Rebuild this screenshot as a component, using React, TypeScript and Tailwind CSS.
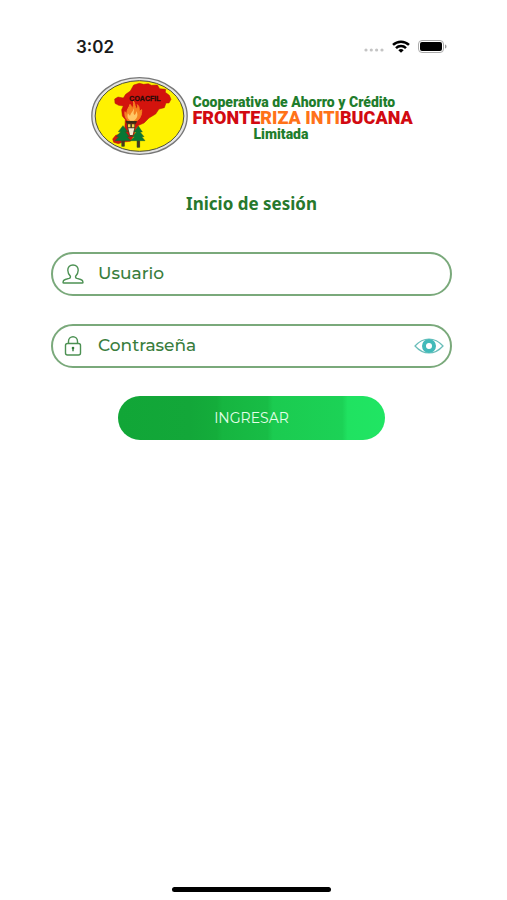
import { useState } from "react"

function StatusBar() {
  return (
    <div className="flex h-[59px] items-end justify-between pr-14 pl-[76px]">
      <span className="font-['Inter'] text-[17px] leading-6 font-semibold text-[#1a1a1a]">3:02</span>
      <div className="flex h-6 items-center gap-2 pb-0.5">
        <svg width="20" height="4" viewBox="0 0 20 4" className="mt-2" fill="#c4c4c4" aria-hidden="true">
          <circle cx="2" cy="2" r="1.6" />
          <circle cx="7.3" cy="2" r="1.6" />
          <circle cx="12.6" cy="2" r="1.6" />
          <circle cx="18" cy="2" r="1.6" />
        </svg>
        <svg width="18" height="13" viewBox="0 0 18 13" fill="none" stroke="#000" strokeWidth="2.5" aria-hidden="true">
          <path d="M1 4.9a11.6 11.6 0 0 1 16 0" />
          <path d="M4 8.1a7.2 7.2 0 0 1 10 0" />
          <path d="M9 12.8 6.3 10.2a3.9 3.9 0 0 1 5.4 0Z" fill="#000" stroke="none" />
        </svg>
        <svg width="29" height="13" viewBox="0 0 29 13" aria-hidden="true">
          <rect x="0.5" y="0.5" width="25" height="12" rx="3.5" fill="#fff" stroke="#aaa" />
          <rect x="2" y="2" width="22" height="9" rx="2" fill="#000" />
          <path d="M27 4.5c2 .6 2 3.4 0 4Z" fill="#999" />
        </svg>
      </div>
    </div>
  )
}

function Emblem() {
  return (
    <svg width="97" height="78" viewBox="15 20 291 234" className="shrink-0" role="img" aria-label="COACFIL">
      <ellipse cx="160.5" cy="137" rx="143" ry="115" fill="#e4e4e4" stroke="#777" strokeWidth="4" />
      <ellipse cx="160.5" cy="137" rx="133" ry="106" fill="#fff200" stroke="#4d4d3a" strokeWidth="3" />
      <path
        d="M143 44 160 39 173 42 187 40 196 45 214 44 221 55 239 57 238 66 250 75 255 87 249 98 240 98 235 112 219 116 209 131 189 143 174 158 158 165 149 176 143 196 133 213 112 215 97 220 83 216 80 206 89 195 106 190 116 178 118 148 109 137 107 118 112 107 98 105 87 99 86 86 96 80 112 83 119 72 133 62Z"
        fill="#d3130d"
        stroke="#a81d0a"
        strokeWidth="1.5"
      />
      {/* flame */}
      <path
        d="M142 92c7 9 3 17 10 23 4-4 3-9 2-12 8 7 5 15 6 21l7-6c1 15-5 29-17 35h-20c-11-5-15-18-13-29l6 6c-2-13 8-20 9-28 5 5 5 10 5 14 6-7 7-15 5-24Z"
        fill="#f58220"
        stroke="#f58220"
        strokeWidth="3"
      />
      <path d="M143 114c3 9-3 12 2 20 5-3 6-8 6-12 7 12 2 24-8 29h-10c-9-6-10-13-7-22 3 4 4 6 6 7 2-9 10-12 11-22Z" fill="#ffc765" />
      {/* torch */}
      <path d="M119 152h34l-3 8h-28Z" fill="#3a2b14" />
      <path d="M122 160h26l-2 19-8 20h-6l-7-20Z" fill="#4a3f22" />
      <path d="M126 162h7v9h-7ZM138 162h7v9h-7Z" fill="#f6d24a" />
      <path d="M127 174h18l-5 20h-8Z" fill="#f4ead0" />
      {/* pines */}
      <path
        d="M111 166 97 184h7l-13 15h8l-12 12h20v17h8v-17h19l-11-12h7l-12-15h7Z"
        fill="#087735"
        stroke="#22592d"
        strokeWidth="1.5"
      />
      <path
        d="M157 167 144 185h7l-12 14h7l-13 12h20v20h8v-20h16l-10-12h7l-12-14h7Z"
        fill="#087735"
        stroke="#22592d"
        strokeWidth="1.5"
      />
      <path d="M108 211h7v17h-7ZM154 211h7v20h-7Z" fill="#50341a" />
      <text x="130" y="91" className="font-['Liberation_Sans'] text-[21px] font-bold" fill="#280b08" stroke="#280b08" strokeWidth="0.8">
        COACFIL
      </text>
    </svg>
  )
}

function Brand() {
  return (
    <header className="mt-[18px] flex items-center justify-center gap-[5px]">
      <Emblem />
      <div className="w-[220px] pt-1 font-['Roboto'] font-black whitespace-nowrap">
        <p className="text-sm leading-4 text-[#1f7d2c]">Cooperativa de Ahorro y Crédito</p>
        <p className="text-lg leading-4 text-[#d20a11]">
          FRONTE<span className="text-[#ff7219]">RIZA INTI</span>BUCANA
        </p>
        <p className="pl-[61px] text-sm leading-4 text-[#1f7d2c]">Limitada</p>
      </div>
    </header>
  )
}

function UserIcon() {
  return (
    <svg width="22" height="20" viewBox="0 0 22 20" fill="none" stroke="#4c9153" strokeWidth="1.4" strokeLinejoin="round" aria-hidden="true">
      <path d="M11 1C7.6 1 5.7 3 5.8 6.2c.1 2.6 1 4.600 2.500 5.900.5 1.200-.1 1.900-1.300 2.300l-3.700 1.100C1.700 16.100 1 17 1 18.200c0 .5.3.8.8.8h18.400c.5 0 .8-.3.8-.8 0-1.200-.7-2.100-2.300-2.700L15 14.400c-1.200-.4-1.800-1.100-1.300-2.300 1.500-1.300 2.400-3.300 2.500-5.900C16.300 3 14.400 1 11 1Z" />
    </svg>
  )
}

function LockIcon() {
  return (
    <svg width="22" height="20" viewBox="0 0 22 20" fill="none" stroke="#4c9153" strokeWidth="1.4" aria-hidden="true">
      <rect x="3.5" y="7.5" width="15" height="11.5" rx="2" />
      <path d="M6.5 7.500V5.200a4.500 4.500 0 0 1 9 0v2.300" />
      <circle cx="11" cy="12" r="1.3" fill="#347c3b" stroke="none" />
      <path d="M11 12v3.300" stroke="#347c3b" />
    </svg>
  )
}

function EyeIcon() {
  return (
    <svg width="30" height="16" viewBox="0 0 30 16" fill="none" aria-hidden="true">
      <path d="M1 8C5.500 3 10 1 15 1s9.500 2 14 7c-4.500 5-9 7-14 7S5.500 13 1 8Z" stroke="#69bdb9" strokeWidth="1.2" />
      <circle cx="15" cy="8" r="5" stroke="#41bab9" strokeWidth="4" />
      <path d="m15 4.800 1 2.200 2.200 1-2.200 1-1 2.200L14 9l-2.200-1L14 7Z" fill="#fff" />
    </svg>
  )
}

const fieldClass = "flex h-11 items-center gap-3 rounded-full border-2 border-[#7aa97b] pr-1.5 pl-[9px]"
const inputClass =
  "min-w-0 flex-1 bg-transparent pl-0.5 font-['Montserrat','Inter'] text-[17px] font-medium text-[#397d3d] outline-none placeholder:text-[#397d3d] placeholder:opacity-100"

export default function App() {
  const [user, setUser] = useState("")
  const [password, setPassword] = useState("")
  const [visible, setVisible] = useState(false)

  return (
    <div className="flex min-h-screen flex-col bg-white pr-1">
      <StatusBar />
      <Brand />

      <main className="mt-[37px] px-[51px]">
        <h1 className="text-center font-['Noto_Sans'] text-[17px] leading-6 font-bold text-[#27782d]">
          Inicio de sesión
        </h1>

        <form className="mt-9" onSubmit={(e) => e.preventDefault()}>
          <div className={fieldClass}>
            <label htmlFor="usuario" aria-label="Usuario">
              <UserIcon />
            </label>
            <input
              id="usuario"
              type="text"
              placeholder="Usuario"
              value={user}
              onChange={(e) => setUser(e.target.value)}
              className={inputClass}
            />
          </div>

          <div className={"mt-7 " + fieldClass}>
            <label htmlFor="contrasena" aria-label="Contraseña">
              <LockIcon />
            </label>
            <input
              id="contrasena"
              type={visible ? "text" : "password"}
              placeholder="Contraseña"
              value={password}
              onChange={(e) => setPassword(e.target.value)}
              className={inputClass}
            />
            <button type="button" aria-label="Mostrar contraseña" onClick={() => setVisible(!visible)}>
              <EyeIcon />
            </button>
          </div>

          <button
            type="submit"
            className="mx-auto mt-7 block h-11 w-2/3 rounded-full bg-[linear-gradient(90deg,#11a637_0%,#13a739_27%,#14ad3b_37%,#16b540_39%,#18bd46_56%,#1bcb50_58%,#1cd256_84%,#20e261_86%,#20e563_100%)] font-['Montserrat','Inter'] text-sm text-[#e3ffe8]"
          >
            INGRESAR
          </button>
        </form>
      </main>

      <div className="mx-auto mt-auto mb-2 h-[5px] w-[159px] rounded-full bg-black" />
    </div>
  )
}
